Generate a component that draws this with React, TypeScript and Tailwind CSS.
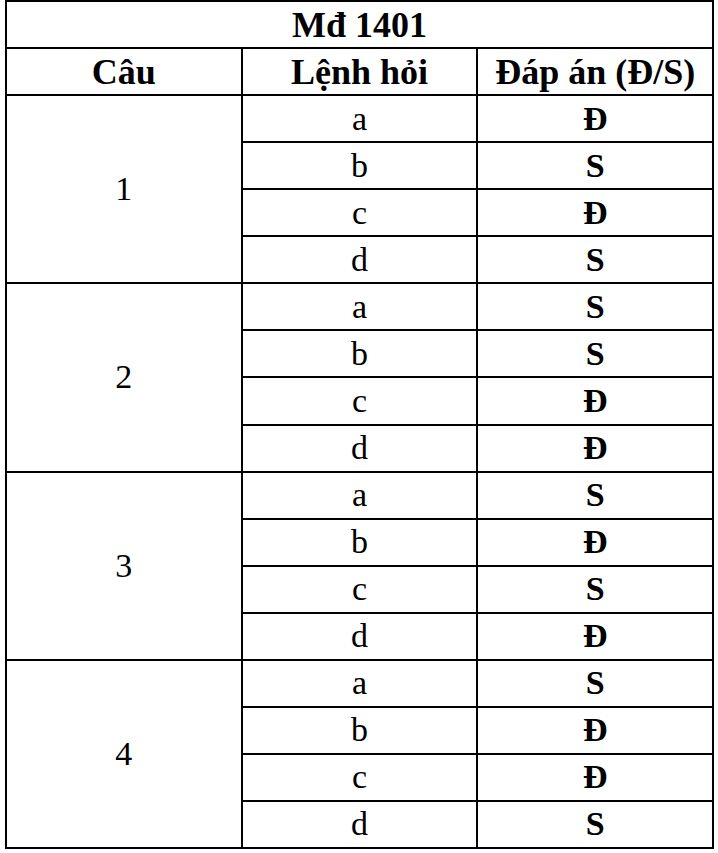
import React from "react";

const groups: { q: string; rows: [string, string][] }[] = [
  { q: "1", rows: [["a", "Đ"], ["b", "S"], ["c", "Đ"], ["d", "S"]] },
  { q: "2", rows: [["a", "S"], ["b", "S"], ["c", "Đ"], ["d", "Đ"]] },
  { q: "3", rows: [["a", "S"], ["b", "Đ"], ["c", "S"], ["d", "Đ"]] },
  { q: "4", rows: [["a", "S"], ["b", "Đ"], ["c", "Đ"], ["d", "S"]] },
];

export default function App() {
  return (
    <div
      className="min-h-[853px] w-[718px] bg-white text-black"
      style={{ fontFamily: '"Liberation Serif", "Times New Roman", serif' }}
    >
      <div className="ml-[5px] grid h-[849px] w-[709px] grid-cols-3 grid-rows-[repeat(18,minmax(0,1fr))] gap-[2px] bg-black p-[2px]">
        <div className="col-span-3 flex items-center justify-center bg-white text-[36px] font-bold leading-none">
          Mđ 1401
        </div>
        <div className="flex items-center justify-center bg-white text-[36px] font-bold leading-none">Câu</div>
        <div className="flex items-center justify-center bg-white text-[36px] font-bold leading-none">Lệnh hỏi</div>
        <div className="flex items-center justify-center bg-white text-[36px] font-bold leading-none">Đáp án (Đ/S)</div>
        {groups.map((g) => (
          <React.Fragment key={g.q}>
            <div className="row-span-4 flex items-center justify-center bg-white text-[34px] leading-none">{g.q}</div>
            {g.rows.map(([l, a]) => (
              <React.Fragment key={l}>
                <div className="flex items-center justify-center bg-white text-[34px] leading-none">{l}</div>
                <div className="flex items-center justify-center bg-white text-[34px] font-bold leading-none">{a}</div>
              </React.Fragment>
            ))}
          </React.Fragment>
        ))}
      </div>
    </div>
  );
}
